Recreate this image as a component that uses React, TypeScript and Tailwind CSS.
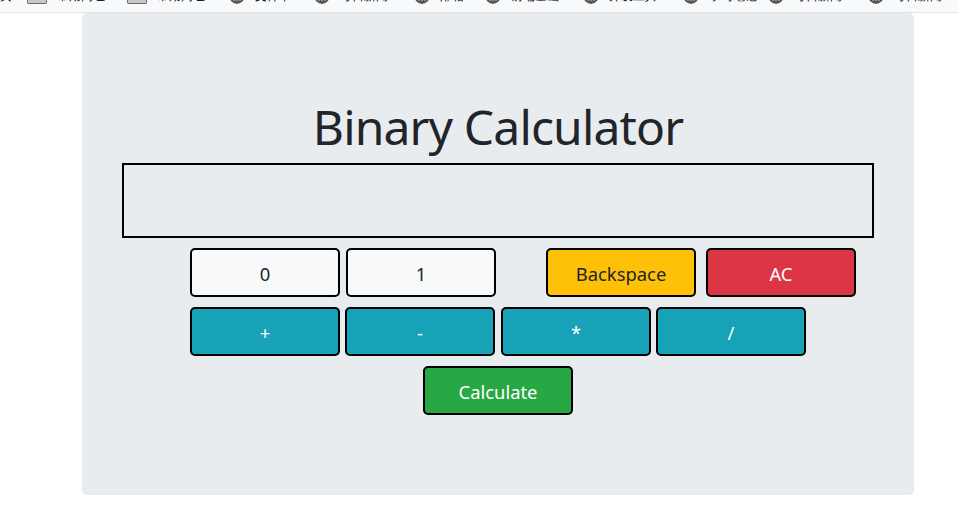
import { Globe } from "lucide-react";

const bookmarks = [
  { kind: "none", label: "页", width: 27 },
  { kind: "folder", label: "常用网址", width: 100 },
  { kind: "folder", label: "常用网址", width: 102 },
  { kind: "globe", label: "文件下", width: 85 },
  { kind: "globe", label: "每日新闻...", width: 100 },
  { kind: "globe", label: "邮箱..", width: 71 },
  { kind: "globe", label: "前端基础...", width: 98 },
  { kind: "globe", label: "开发工具...", width: 100 },
  { kind: "globe", label: "学习笔记", width: 85 },
  { kind: "globe", label: "每日新闻...", width: 100 },
  { kind: "globe", label: "每日新闻...", width: 90 },
];

function BookmarksBar() {
  return (
    <div className="flex h-[13px] overflow-hidden border-b border-[#e3e4e5] bg-[#f8f9fa]">
      {bookmarks.map((b, i) => (
        <div key={i} className="flex shrink-0 items-start" style={{ width: b.width }}>
          {b.kind === "folder" && (
            <div className="mr-[10px] h-[4px] w-[20px] shrink-0 rounded-b-[2px] border-x border-b border-[#6b6b6b] bg-[#c8c8c8]" />
          )}
          {b.kind === "globe" && (
            <Globe className="-mt-[12px] mr-[10px] h-4 w-4 shrink-0 text-[#555555]" strokeWidth={3} />
          )}
          <span className="-mt-[12px] whitespace-nowrap text-[12px] leading-[15px] text-black">
            {b.label}
          </span>
        </div>
      ))}
    </div>
  );
}

function CalcButton({ label, className }: { label: string; className: string }) {
  return (
    <button
      type="button"
      className={`h-[49px] w-[150px] shrink-0 rounded-[5px] border-2 border-black pt-[1px] text-center text-[18.4px] leading-[27px] ${className}`}
    >
      {label}
    </button>
  );
}

export default function App() {
  return (
    <div className="min-h-[515px] bg-white font-['Noto_Sans',sans-serif] text-[#212529]">
      <BookmarksBar />

      <div className="ml-[82px] w-[832px] rounded-[5px] bg-[#e9ecef] px-10 pb-[80px] pt-[81px]">
        <h1 className="pb-[3px] text-center text-[48px] font-normal leading-[66px] tracking-[-0.85px]">
          Binary Calculator
        </h1>

        {/* Display */}
        <div className="h-[75px] border-2 border-black" />

        <div className="mt-[10px] flex flex-col gap-[10px]">
          <div className="ml-[68px] flex">
            <CalcButton label="0" className="bg-[#f8f9fa]" />
            <CalcButton label="1" className="ml-[6px] bg-[#f8f9fa]" />
            <CalcButton label="Backspace" className="ml-[50px] bg-[#ffc107]" />
            <CalcButton label="AC" className="ml-[10px] bg-[#dc3545] text-white" />
          </div>

          <div className="ml-[68px] flex">
            <CalcButton label="+" className="bg-[#17a2b8] text-white" />
            <CalcButton label="-" className="ml-[5px] bg-[#17a2b8] text-white" />
            <CalcButton label="*" className="ml-[6px] bg-[#17a2b8] text-white" />
            <CalcButton label="/" className="ml-[5px] bg-[#17a2b8] text-white" />
          </div>

          <div className="flex justify-center">
            <CalcButton label="Calculate" className="bg-[#28a745] text-white" />
          </div>
        </div>
      </div>
    </div>
  );
}
